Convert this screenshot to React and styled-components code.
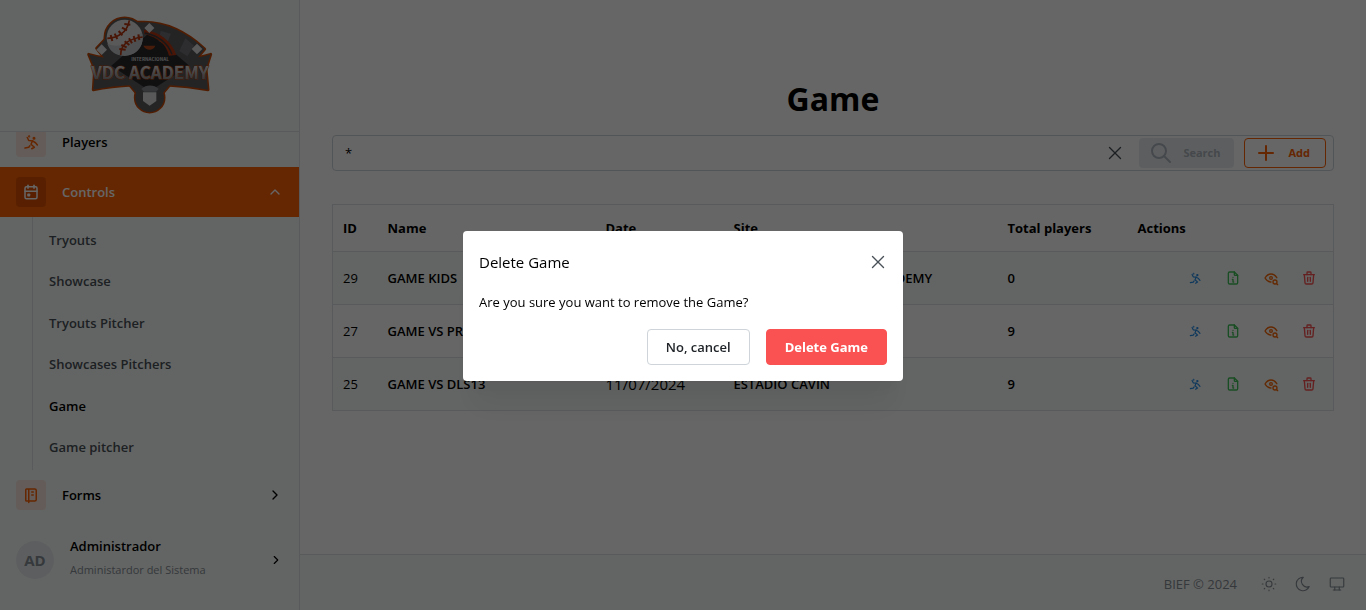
import React, { useState } from "react";
import styled, { createGlobalStyle } from "styled-components";
import {
  TbCalendarEvent,
  TbChevronRight,
  TbChevronUp,
  TbDeviceDesktop,
  TbEyeSearch,
  TbFileInfo,
  TbMoon,
  TbNotebook,
  TbPlayHandball,
  TbPlus,
  TbSearch,
  TbSun,
  TbTrash,
  TbX,
} from "react-icons/tb";

const subItems = [
  "Tryouts",
  "Showcase",
  "Tryouts Pitcher",
  "Showcases Pitchers",
  "Game",
  "Game pitcher",
];

const games = [
  { id: 29, name: "GAME KIDS", date: "11/09/2024", site: "INTERNACIONAL VDC ACADEMY", total: 0 },
  { id: 27, name: "GAME VS PRADO", date: "11/08/2024", site: "ESTADIO CAVIN", total: 9 },
  { id: 25, name: "GAME VS DLS13", date: "11/07/2024", site: "ESTADIO CAVIN", total: 9 },
];

function LogoShapes() {
  return (
    <>
      <path d="M80 146L112 112 180 68h42c66 0 130 32 182 80l-36 44H116z" />
      <path d="M56 164c34 10 66 14 100 14h170c34 0 64-4 96-14l-14 44 6 62c-44-8-84-12-124-14H188c-40 2-78 6-118 14l4-62z" />
      <path d="M176 252h126l-30 36h-66z" />
      <circle cx="164" cy="114" r="59" />
      <circle cx="239" cy="294" r="43" />
    </>
  );
}

function Logo() {
  return (
    <LogoSvg viewBox="48 46 384 300" role="img" aria-label="VDC Academy">
      <defs>
        <linearGradient id="steel" x1="0" y1="0" x2="0" y2="1">
          <stop offset="0.3" stopColor="#d4d4d6" />
          <stop offset="1" stopColor="#6d6d70" />
        </linearGradient>
      </defs>
      <g fill="#c94a08" stroke="#c94a08" strokeWidth="9" strokeLinejoin="round">
        <LogoShapes />
      </g>
      <g fill="#5a5b5e">
        <LogoShapes />
      </g>
      <path d="M240 98l118 100-118 76-116-76z" fill="#29292c" />
      <path d="M272 94l30 8-12 34-24-12zM346 116l26 22-20 32-24-16z" fill="#707175" />
      <path d="M222 90c46 6 82 32 97 76l-22 2c-8-34-32-54-75-66z" fill="#b5350f" />
      <path d="M224 100c42 8 70 32 82 64" stroke="#3c3c40" strokeWidth="4" fill="none" />
      <path d="M220 138h36c-6 16-28 16-36 0z" fill="#b5481a" />
      <circle cx="164" cy="114" r="54" fill="#dededf" />
      <path d="M112 132c28 14 70 4 103-36 12 38-13 72-51 72-27 0-44-12-52-36z" fill="#c4c5c7" />
      <g stroke="#b5350f" fill="none" strokeWidth="5">
        <path d="M112 116c32-1 60-18 66-54M152 166c0-34 30-50 66-54" />
        <path
          d="M122 106l5 18M134 102l8 16M146 94l11 13M156 84l15 8M163 73l18 2M148 148l19 2M154 136l16 7M164 125l14 11M177 116l9 15M191 109l5 17M205 104l3 17"
          strokeWidth="6"
        />
      </g>
      <g fill="#dededf">
        <path d="M238 70l15 15-15 15-15-15zM95 134l16 16-16 16-16-16zM381 132l16 16-16 16-16-16z" />
      </g>
      <text x="240" y="185" fontSize="14" fontWeight="700" fill="#ccc" textAnchor="middle">
        INTERNACIONAL
      </text>
      <LogoName x="240" y="238" textAnchor="middle">
        VDC ACADEMY
      </LogoName>
      <path d="M214 268c14-14 38-14 52 0l-8 8h-36z" fill="#88898c" />
      <path d="M219 278h40v26l-20 14-20-14z" fill="#dededf" />
    </LogoSvg>
  );
}

export default function App() {
  const [open, setOpen] = useState(true);
  const [search, setSearch] = useState("*");

  return (
    <>
      <GlobalStyle />
      <Shell>
        <Sidebar>
          <Brand>
            <Logo />
          </Brand>
          <Nav>
            <NavButton type="button">
              <IconBox>
                <TbPlayHandball size={18} />
              </IconBox>
              Players
            </NavButton>
            <NavButton type="button" $active>
              <IconBox $active>
                <TbCalendarEvent size={18} />
              </IconBox>
              Controls
              <TbChevronUp size={16} />
            </NavButton>
            <SubNav>
              {subItems.map((item) => (
                <SubLink href="#" key={item} $active={item === "Game"}>
                  {item}
                </SubLink>
              ))}
            </SubNav>
            <NavButton type="button">
              <IconBox>
                <TbNotebook size={18} />
              </IconBox>
              Forms
              <TbChevronRight size={16} />
            </NavButton>
          </Nav>
          <UserButton type="button">
            <Avatar>AD</Avatar>
            <UserInfo>
              <UserName>Administrador</UserName>
              <UserRole>Administardor del Sistema</UserRole>
            </UserInfo>
            <TbChevronRight size={14} />
          </UserButton>
        </Sidebar>

        <Page>
          <Content>
            <Title>Game</Title>
            <SearchBar>
              <SearchInput
                aria-label="Search games"
                value={search}
                onChange={(e) => setSearch(e.target.value)}
              />
              <CloseButton type="button" aria-label="Clear" onClick={() => setSearch("")}>
                <TbX size={22} strokeWidth={1.5} />
              </CloseButton>
              <SearchButton type="button" disabled>
                <TbSearch size={24} />
                Search
              </SearchButton>
              <AddButton type="button">
                <TbPlus size={24} />
                Add
              </AddButton>
            </SearchBar>

            <Table>
              <colgroup>
                <Col $share={45} />
                <Col $share={218} />
                <Col $share={128} />
                <Col $share={274} />
                <Col $share={130} />
                <Col $share={206} />
              </colgroup>
              <thead>
                <tr>
                  <Th>ID</Th>
                  <Th>Name</Th>
                  <Th>Date</Th>
                  <Th>Site</Th>
                  <Th>Total players</Th>
                  <Th>Actions</Th>
                </tr>
              </thead>
              <tbody>
                {games.map((game) => (
                  <Row key={game.id}>
                    <Td>{game.id}</Td>
                    <Td $strong>{game.name}</Td>
                    <Td $large>{game.date}</Td>
                    <Td $strong>{game.site}</Td>
                    <Td $strong>{game.total}</Td>
                    <Td>
                      <Actions>
                        <ActionIcon type="button" aria-label="Players" $color="#228be6">
                          <TbPlayHandball size={14} />
                        </ActionIcon>
                        <ActionIcon type="button" aria-label="Report" $color="#40c057">
                          <TbFileInfo size={16} />
                        </ActionIcon>
                        <ActionIcon type="button" aria-label="View" $color="#f76707">
                          <TbEyeSearch size={16} />
                        </ActionIcon>
                        <ActionIcon
                          type="button"
                          aria-label="Delete"
                          $color="#fa5252"
                          onClick={() => setOpen(true)}
                        >
                          <TbTrash size={16} />
                        </ActionIcon>
                      </Actions>
                    </Td>
                  </Row>
                ))}
              </tbody>
            </Table>
          </Content>
          <Footer>
            <span>BIEF © 2024</span>
            <ThemeIcons>
              <ThemeButton type="button" aria-label="Light">
                <TbSun size={18} strokeWidth={1.5} />
              </ThemeButton>
              <ThemeButton type="button" aria-label="Dark">
                <TbMoon size={18} strokeWidth={1.5} />
              </ThemeButton>
              <ThemeButton type="button" aria-label="System">
                <TbDeviceDesktop size={18} strokeWidth={1.5} />
              </ThemeButton>
            </ThemeIcons>
          </Footer>
        </Page>
      </Shell>

      {open && (
        <Overlay>
          <Modal role="dialog" aria-modal="true" aria-labelledby="modal-title">
            <ModalHeader>
              <ModalTitle id="modal-title">Delete Game</ModalTitle>
              <CloseButton type="button" aria-label="Close" onClick={() => setOpen(false)}>
                <TbX size={22} strokeWidth={1.5} />
              </CloseButton>
            </ModalHeader>
            <ModalBody>
              <ModalText>Are you sure you want to remove the Game?</ModalText>
              <ModalButtons>
                <ModalButton type="button" onClick={() => setOpen(false)}>
                  No, cancel
                </ModalButton>
                <ModalButton type="button" $danger onClick={() => setOpen(false)}>
                  Delete Game
                </ModalButton>
              </ModalButtons>
            </ModalBody>
          </Modal>
        </Overlay>
      )}
    </>
  );
}

const GlobalStyle = createGlobalStyle`
  * {
    box-sizing: border-box;
  }
  body {
    margin: 0;
    color: #000;
    background: #fff;
    font-family: "Segoe UI", "Open Sans", sans-serif;
    font-size: 13px;
    line-height: 22px;
  }
  button, input {
    font-family: inherit;
    font-size: inherit;
    line-height: inherit;
  }
  button {
    cursor: pointer;
  }
`;

const Shell = styled.div`
  display: flex;
  height: 100vh;
`;

const Sidebar = styled.aside`
  display: flex;
  flex-direction: column;
  flex: 0 0 300px;
  padding-bottom: 10px;
  background: #f8fcf9;
  border-right: 1px solid #dee2e6;
`;

const Brand = styled.div`
  display: flex;
  justify-content: center;
  padding: 15px 0 16px;
  border-bottom: 1px solid #dee2e6;
`;

const LogoSvg = styled.svg`
  display: block;
  width: 128px;
  height: 100px;
  font-family: "Noto Sans CJK SC", "Liberation Sans", sans-serif;
`;

const LogoName = styled.text`
  fill: url(#steel);
  stroke: #b5440d;
  stroke-width: 3px;
  paint-order: stroke;
  font-size: 51px;
  font-weight: 700;
`;

const Nav = styled.nav`
  display: flex;
  flex: 1;
  flex-direction: column;
  justify-content: flex-end;
  min-height: 0;
  overflow: hidden;
`;

const NavButton = styled.button`
  display: flex;
  flex: 0 0 50px;
  align-items: center;
  gap: 16px;
  padding: 0 16px;
  border: 0;
  color: ${(p) => (p.$active ? "#fff" : "#000")};
  background: ${(p) => (p.$active ? "#fd6104" : "transparent")};
  font-weight: 600;
  text-align: left;

  > svg {
    margin-left: auto;
  }
`;

const IconBox = styled.span`
  display: flex;
  align-items: center;
  justify-content: center;
  width: 30px;
  height: 30px;
  border-radius: 4px;
  color: ${(p) => (p.$active ? "#fff" : "#fd6104")};
  background: ${(p) => (p.$active ? "#dc5200" : "#fbe6dc")};
`;

const SubNav = styled.div`
  display: grid;
  flex: 0 0 253px;
  grid-auto-rows: 1fr;
  margin-left: 32px;
  padding: 2px 0;
  border-left: 1px solid #dee2e6;
`;

const SubLink = styled.a`
  display: flex;
  align-items: center;
  padding: 0 16px;
  color: ${(p) => (p.$active ? "#000" : "#495057")};
  font-weight: 600;
  text-decoration: none;
`;

const UserButton = styled.button`
  display: flex;
  flex: 0 0 80px;
  align-items: center;
  gap: 16px;
  padding: 0 16px;
  border: 0;
  color: #000;
  background: transparent;
  text-align: left;
`;

const Avatar = styled.span`
  display: flex;
  align-items: center;
  justify-content: center;
  width: 38px;
  height: 38px;
  border-radius: 50%;
  color: #868e96;
  background: #e9ecef;
  font-size: 15px;
  font-weight: 700;
`;

const UserInfo = styled.span`
  display: flex;
  flex: 1;
  flex-direction: column;
  gap: 2px;
  padding-bottom: 4px;
`;

const UserName = styled.span`
  font-weight: 600;
`;

const UserRole = styled.span`
  color: #868e96;
  font-size: 11px;
`;

const Page = styled.div`
  display: flex;
  flex: 1;
  flex-direction: column;
  min-width: 0;
`;

const Content = styled.main`
  flex: 1;
  padding: 77px 32px 0;
`;

const Title = styled.h1`
  margin: 0 0 14px;
  font-size: 32px;
  font-weight: 700;
  line-height: 44px;
  text-align: center;
`;

const SearchBar = styled.div`
  display: flex;
  align-items: center;
  height: 36px;
  margin-bottom: 33px;
  padding: 0 7px 0 12px;
  border: 1px solid #ced4da;
  border-radius: 4px;
`;

const SearchInput = styled.input`
  flex: 1;
  min-width: 0;
  padding: 0;
  border: 0;
  outline: 0;
  background: transparent;
`;

const CloseButton = styled.button`
  display: flex;
  align-items: center;
  justify-content: center;
  width: 28px;
  height: 28px;
  padding: 0;
  border: 0;
  color: #495057;
  background: transparent;
`;

const BarButton = styled.button`
  display: flex;
  align-items: center;
  gap: 10px;
  height: 30px;
  border-radius: 4px;
  font-size: 11px;
  font-weight: 700;
`;

const SearchButton = styled(BarButton)`
  margin: 0 10px;
  padding: 0 14px 0 10px;
  border: 0;
  color: #adb5bd;
  background: #e9ecef;
`;

const AddButton = styled(BarButton)`
  padding: 0 15px 0 9px;
  border: 1px solid #fd6104;
  color: #fd6104;
  background: transparent;
`;

const Table = styled.table`
  width: 100%;
  table-layout: fixed;
  border: 1px solid #dee2e6;
  border-collapse: collapse;
`;

const Col = styled.col`
  width: ${(p) => p.$share / 10.01}%;
`;

const Th = styled.th`
  height: 47px;
  padding: 0 10px;
  font-weight: 700;
  text-align: left;
`;

const Row = styled.tr`
  border-top: 1px solid #dee2e6;

  &:nth-child(odd) {
    background: #f8fcf9;
  }
`;

const Td = styled.td`
  height: 53px;
  padding: 0 10px;
  font-size: ${(p) => (p.$large ? "15px" : "13px")};
  font-weight: ${(p) => (p.$strong ? 600 : 400)};
  white-space: nowrap;
`;

const Actions = styled.div`
  display: flex;
  justify-content: flex-end;
  gap: 10px;
`;

const ActionIcon = styled.button`
  display: flex;
  align-items: center;
  justify-content: center;
  width: 28px;
  height: 28px;
  padding: 0;
  border: 0;
  color: ${(p) => p.$color};
  background: transparent;
`;

const Footer = styled.footer`
  display: flex;
  align-items: center;
  justify-content: flex-end;
  gap: 18px;
  height: 56px;
  padding: 2px 15px 0;
  border-top: 1px solid #dee2e6;
  color: #868e96;
  background: #f8fcf9;
`;

const ThemeIcons = styled.div`
  display: flex;
  gap: 6px;
`;

const ThemeButton = styled(CloseButton)`
  color: #868e96;
`;

const Overlay = styled.div`
  position: fixed;
  inset: 0;
  display: flex;
  align-items: center;
  justify-content: center;
  padding-top: 2px;
  background: rgba(0, 0, 0, 0.6);
`;

const Modal = styled.section`
  width: 440px;
  max-width: 90vw;
  border-radius: 4px;
  background: #fff;
  box-shadow: 0 1px 3px rgba(0, 0, 0, 0.05), 0 36px 28px -7px rgba(0, 0, 0, 0.05),
    0 17px 17px -7px rgba(0, 0, 0, 0.04);
`;

const ModalHeader = styled.header`
  display: flex;
  align-items: center;
  justify-content: space-between;
  padding: 17px 11px 15px 16px;
`;

const ModalTitle = styled.h2`
  margin: 0;
  font-size: 15px;
  font-weight: 400;
`;

const ModalBody = styled.div`
  padding: 0 16px 16px;
`;

const ModalText = styled.p`
  margin: 0 0 16px;
`;

const ModalButtons = styled.div`
  display: flex;
  justify-content: flex-end;
  gap: 16px;
`;

const ModalButton = styled.button`
  height: 36px;
  padding: 0 18px;
  border: 1px solid ${(p) => (p.$danger ? "#fa5252" : "#ced4da")};
  border-radius: 4px;
  color: ${(p) => (p.$danger ? "#fff" : "#212529")};
  background: ${(p) => (p.$danger ? "#fa5252" : "#fff")};
  font-weight: ${(p) => (p.$danger ? 700 : 600)};
`;
